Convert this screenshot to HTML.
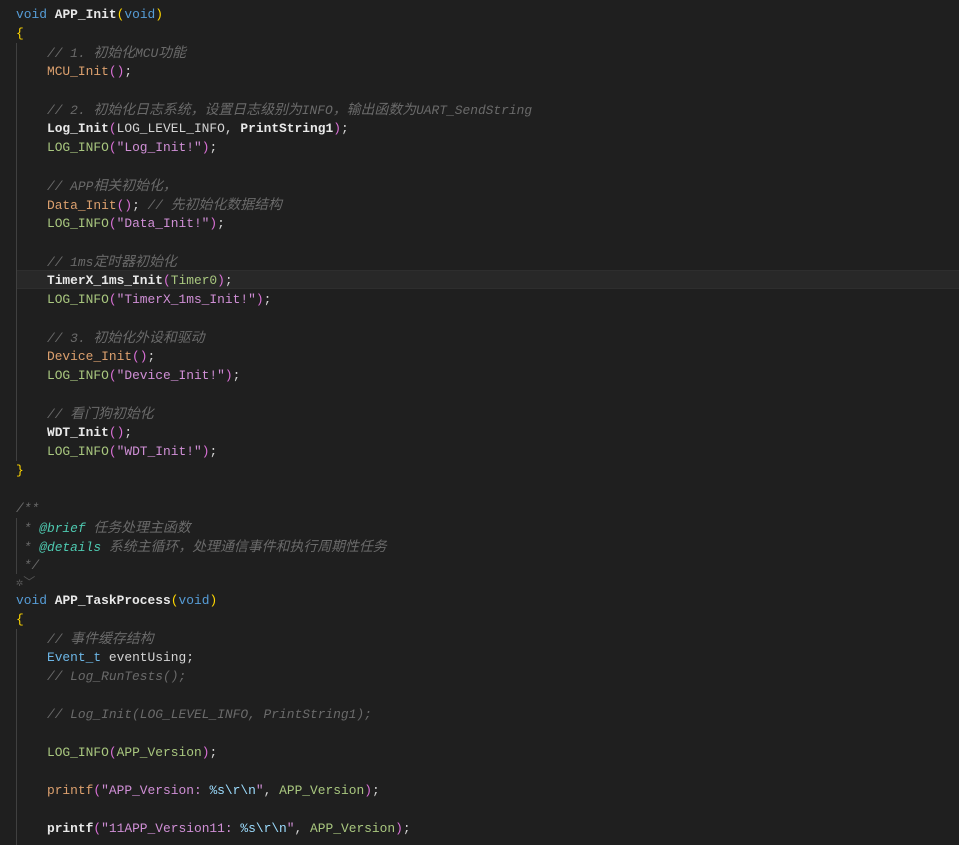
<!DOCTYPE html>
<html><head><meta charset="utf-8"><style>
body{margin:0;background:#1f1f1f;width:959px;height:845px;overflow:hidden;position:relative}
.c{position:absolute;left:16px;top:-14.5px;font-family:"Liberation Mono","Noto Sans CJK SC",monospace;font-size:12.9px;line-height:19px;color:#d4d4d4;white-space:pre}
.l{height:19px}
.z{font-size:13.9px;font-family:"Noto Sans CJK SC",sans-serif;line-height:19px}
.k{color:#569cd6}.f{color:#e8e8e8;font-weight:bold}.o{color:#dca06e}.g{color:#a9c77f}
.s{color:#d08fd6}.cm{color:#6a6a6a;font-style:italic}.y{color:#ffd700}.p{color:#da70d6}
.t{color:#6cb6e6}.d{color:#4ec9b0;font-style:italic}.v{color:#9cdcfe}.w{color:#d4d4d4}
.hl{position:absolute;left:16px;right:0;top:270px;height:19px;background:#282828;border-top:1px solid #2e2e2e;border-bottom:1px solid #2e2e2e;box-sizing:border-box}
.gd{position:absolute;left:16px;width:1px;background:#404040}
</style></head><body>
<div class="hl"></div>
<div class="gd" style="top:43px;height:418px"></div>
<div class="gd" style="top:518px;height:56px"></div>
<div class="gd" style="top:629px;height:216px"></div>
<div class="c"><div class="l"><span class="cm"> */</span></div
><div class="l"><span class="k">void</span> <span class="f">APP_Init</span><span class="y">(</span><span class="k">void</span><span class="y">)</span></div
><div class="l"><span class="y">{</span></div
><div class="l">    <span class="cm">// 1. <span class="z">初始化</span>MCU<span class="z">功能</span></span></div
><div class="l">    <span class="o">MCU_Init</span><span class="p">()</span>;</div
><div class="l"> </div
><div class="l">    <span class="cm">// 2. <span class="z">初始化日志系统，设置日志级别为</span>INFO<span class="z">，输出函数为</span>UART_SendString</span></div
><div class="l">    <span class="f">Log_Init</span><span class="p">(</span>LOG_LEVEL_INFO, <span class="f">PrintString1</span><span class="p">)</span>;</div
><div class="l">    <span class="g">LOG_INFO</span><span class="p">(</span><span class="s">"Log_Init!"</span><span class="p">)</span>;</div
><div class="l"> </div
><div class="l">    <span class="cm">// APP<span class="z">相关初始化，</span></span></div
><div class="l">    <span class="o">Data_Init</span><span class="p">()</span>; <span class="cm">// <span class="z">先初始化数据结构</span></span></div
><div class="l">    <span class="g">LOG_INFO</span><span class="p">(</span><span class="s">"Data_Init!"</span><span class="p">)</span>;</div
><div class="l"> </div
><div class="l">    <span class="cm">// 1ms<span class="z">定时器初始化</span></span></div
><div class="l">    <span class="f">TimerX_1ms_Init</span><span class="p">(</span><span class="g">Timer0</span><span class="p">)</span>;</div
><div class="l">    <span class="g">LOG_INFO</span><span class="p">(</span><span class="s">"TimerX_1ms_Init!"</span><span class="p">)</span>;</div
><div class="l"> </div
><div class="l">    <span class="cm">// 3. <span class="z">初始化外设和驱动</span></span></div
><div class="l">    <span class="o">Device_Init</span><span class="p">()</span>;</div
><div class="l">    <span class="g">LOG_INFO</span><span class="p">(</span><span class="s">"Device_Init!"</span><span class="p">)</span>;</div
><div class="l"> </div
><div class="l">    <span class="cm">// <span class="z">看门狗初始化</span></span></div
><div class="l">    <span class="f">WDT_Init</span><span class="p">()</span>;</div
><div class="l">    <span class="g">LOG_INFO</span><span class="p">(</span><span class="s">"WDT_Init!"</span><span class="p">)</span>;</div
><div class="l"><span class="y">}</span></div
><div class="l"> </div
><div class="l"><span class="cm">/**</span></div
><div class="l"><span class="cm"> * </span><span class="d">@brief</span><span class="cm"> <span class="z">任务处理主函数</span></span></div
><div class="l"><span class="cm"> * </span><span class="d">@details</span><span class="cm"> <span class="z">系统主循环，处理通信事件和执行周期性任务</span></span></div
><div class="l"><span class="cm"> */</span></div
><div class="l" style="height:16px;line-height:16px;color:#555;font-size:12px">✲﹀</div
><div class="l"><span class="k">void</span> <span class="f">APP_TaskProcess</span><span class="y">(</span><span class="k">void</span><span class="y">)</span></div
><div class="l"><span class="y">{</span></div
><div class="l">    <span class="cm">// <span class="z">事件缓存结构</span></span></div
><div class="l">    <span class="t">Event_t</span> <span class="w">eventUsing</span>;</div
><div class="l">    <span class="cm">// Log_RunTests();</span></div
><div class="l"> </div
><div class="l">    <span class="cm">// Log_Init(LOG_LEVEL_INFO, PrintString1);</span></div
><div class="l"> </div
><div class="l">    <span class="g">LOG_INFO</span><span class="p">(</span><span class="g">APP_Version</span><span class="p">)</span>;</div
><div class="l"> </div
><div class="l">    <span class="o">printf</span><span class="p">(</span><span class="s">"APP_Version: </span><span class="v">%s\r\n</span><span class="s">"</span>, <span class="g">APP_Version</span><span class="p">)</span>;</div
><div class="l"> </div
><div class="l">    <span class="f">printf</span><span class="p">(</span><span class="s">"11APP_Version11: </span><span class="v">%s\r\n</span><span class="s">"</span>, <span class="g">APP_Version</span><span class="p">)</span>;</div
></div>
</body></html>
